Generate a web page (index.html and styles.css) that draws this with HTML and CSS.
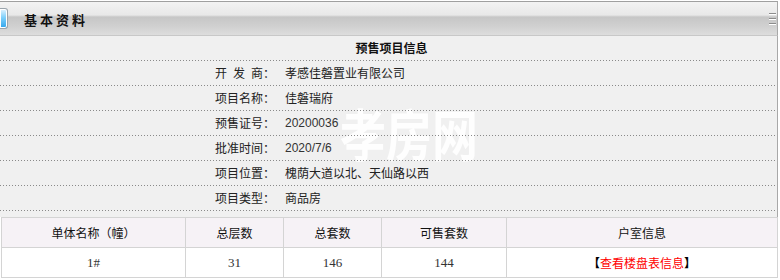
FILE: index.html
```html
<!DOCTYPE html>
<html lang="zh-CN">
<head>
  <meta charset="UTF-8">
  <meta name="viewport" content="width=device-width, initial-scale=1.0">
  <title>基本资料</title>
  <link rel="stylesheet" href="styles.css">
</head>
<body>
  <div class="panel">
    <div class="panel-head">
      <span class="head-icon"></span>
      <h2 class="panel-title">基本资料</h2>
      <span class="head-menu"><i></i><i></i><i></i></span>
    </div>

    <div class="panel-body">
      <span class="watermark">孝房网</span>
      <div class="info-title">预售项目信息</div>
      <div class="info-row"><span class="label">开&ensp;发&ensp;商：</span><span class="value">孝感佳磐置业有限公司</span></div>
      <div class="info-row"><span class="label">项目名称：</span><span class="value">佳磐瑞府</span></div>
      <div class="info-row"><span class="label">预售证号：</span><span class="value num">20200036</span></div>
      <div class="info-row"><span class="label">批准时间：</span><span class="value num">2020/7/6</span></div>
      <div class="info-row"><span class="label">项目位置：</span><span class="value">槐荫大道以北、天仙路以西</span></div>
      <div class="info-row"><span class="label">项目类型：</span><span class="value">商品房</span></div>
    </div>

    <table class="unit-table">
      <colgroup>
        <col class="col-name">
        <col class="col-floor">
        <col class="col-total">
        <col class="col-sale">
        <col class="col-room">
      </colgroup>
      <tr>
        <th>单体名称（幢）</th>
        <th>总层数</th>
        <th>总套数</th>
        <th>可售套数</th>
        <th>户室信息</th>
      </tr>
      <tr>
        <td class="num">1#</td>
        <td class="num">31</td>
        <td class="num">146</td>
        <td class="num">144</td>
        <td><b class="bracket">【</b><a class="room-link" href="#">查看楼盘表信息</a><b class="bracket">】</b></td>
      </tr>
    </table>
  </div>
</body>
</html>
```

FILE: styles.css
```css
body {
  margin: 0;
  font-family: "Noto Sans CJK SC", "Liberation Sans", sans-serif;
  font-size: 12px;
  color: #222;
}
.panel {
  width: 778px;
  margin-top: 1px;
}

/* 标题栏 */
.panel-head {
  box-sizing: border-box;
  height: 35px;
  display: flex;
  align-items: center;
  border-top: 1px solid #a0a0a0;
  border-bottom: 1px solid #c8c8c8;
  border-right: 1px solid #a8a8a8;
  background: linear-gradient(#f3f3f3 0, #e8e8e8 13px, #c6c6c6 15px, #d0d0d0 24px, #dddddd 33px);
}
.head-icon {
  width: 7px;
  height: 19px;
  border: 1px solid #9aa4ac;
  border-left: 0;
  border-radius: 0 3px 3px 0;
  box-shadow: inset 0 0 0 1px #fff;
  background: linear-gradient(#e4f4ff, #7fd0fb 45%, #2ea4ec);
}
.panel-title {
  margin: 0 0 0 16px;
  padding-top: 2px;
  font-size: 13px;
  font-weight: bold;
  letter-spacing: 3px;
  color: #111;
}
.head-menu {
  margin-left: auto;
  margin-right: 1px;
  display: flex;
  flex-direction: column;
  gap: 3px;
}
.head-menu i {
  display: block;
  width: 7px;
  height: 1px;
  border-top: 1px solid #8c8c8c;
  background: #fff;
}

/* 项目信息 */
.panel-body {
  position: relative;
  padding-bottom: 6px;
  background: #f0f0f0;
  border-right: 1px solid #a8a8a8;
}
.info-title,
.info-row {
  position: relative;
  height: 25px;
  line-height: 24px;
  background: linear-gradient(to right, #8a8a8a 1px, transparent 1px) repeat-x left bottom / 3px 1px;
}
.info-title {
  padding-left: 6px;
  text-align: center;
  font-weight: bold;
  color: #111;
}
.info-row {
  display: grid;
  grid-template-columns: 275px 1fr;
}
.info-row .label {
  text-align: right;
}
.info-row .value {
  padding-left: 10px;
}
.num {
  font-family: "Liberation Sans", sans-serif;
  color: #333;
}
/* 水印压在信息行下面 */
.watermark {
  position: absolute;
  left: 340px;
  top: 74px;
  font-size: 46px;
  line-height: 37px;
  font-weight: bold;
  color: rgba(255, 255, 255, 0.9);
  transform: scaleY(1.2);
  transform-origin: left top;
  pointer-events: none;
}

/* 单体列表 */
.unit-table {
  margin-left: 1px;
  width: 777px;
  table-layout: fixed;
  border-collapse: collapse;
}
.unit-table .col-name { width: 184px; }
.unit-table .col-floor { width: 98px; }
.unit-table .col-total { width: 98px; }
.unit-table .col-sale { width: 125px; }
.unit-table .col-room { width: 271px; }
.unit-table th,
.unit-table td {
  height: 29px;
  padding: 0;
  border: 1px solid #d4d4d4;
  text-align: center;
}
.unit-table th {
  font-weight: normal;
  color: #111;
  background: #f6f2f6;
}
.unit-table td {
  background: #fff;
}
.unit-table td.num {
  font-family: "Liberation Serif", serif;
  font-size: 13px;
}
.bracket {
  color: #000;
}
.room-link {
  color: #f00;
  text-decoration: none;
}
```
